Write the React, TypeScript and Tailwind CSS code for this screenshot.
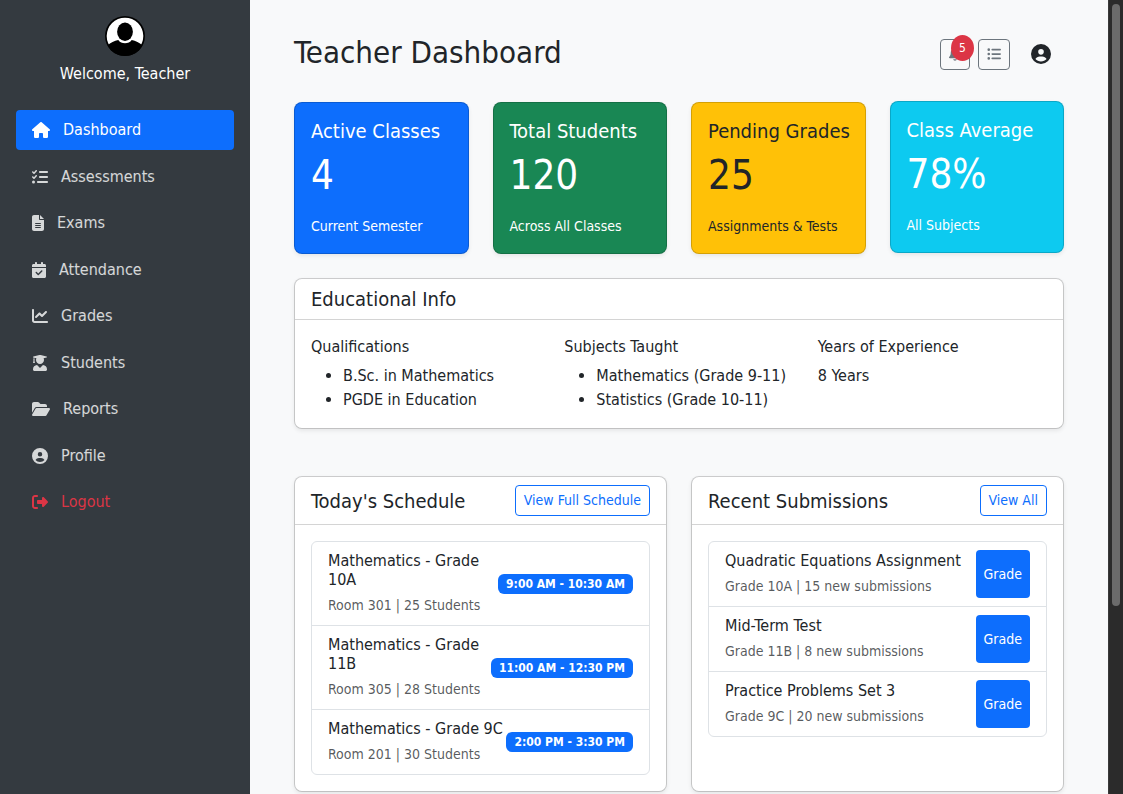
import type { ComponentType, ReactNode } from "react";
import { FaUserGraduate } from "react-icons/fa";
import {
  FaBell,
  FaCalendarCheck,
  FaChartLine,
  FaCircleUser,
  FaFileLines,
  FaFolderOpen,
  FaHouse,
  FaListCheck,
  FaListUl,
  FaRightFromBracket,
} from "react-icons/fa6";

type NavItem = {
  label: string;
  Icon: ComponentType<{ className?: string }>;
  width: string;
  tone: string;
};

const muted = "text-white/80";

const navItems: NavItem[] = [
  { label: "Dashboard", Icon: FaHouse, width: "w-[18px]", tone: "bg-[#0d6efd] text-white" },
  { label: "Assessments", Icon: FaListCheck, width: "w-4", tone: muted },
  { label: "Exams", Icon: FaFileLines, width: "w-3", tone: muted },
  { label: "Attendance", Icon: FaCalendarCheck, width: "w-3.5", tone: muted },
  { label: "Grades", Icon: FaChartLine, width: "w-4", tone: muted },
  { label: "Students", Icon: FaUserGraduate, width: "w-4", tone: muted },
  { label: "Reports", Icon: FaFolderOpen, width: "w-[18px]", tone: muted },
  { label: "Profile", Icon: FaCircleUser, width: "w-4", tone: muted },
  { label: "Logout", Icon: FaRightFromBracket, width: "w-4", tone: "text-[#dc3545]" },
];

const stats = [
  { title: "Active Classes", value: "4", note: "Current Semester", tone: "bg-[#0d6efd] text-white" },
  { title: "Total Students", value: "120", note: "Across All Classes", tone: "bg-[#198754] text-white" },
  { title: "Pending Grades", value: "25", note: "Assignments & Tests", tone: "bg-[#ffc107] text-[#212529]" },
  { title: "Class Average", value: "78%", note: "All Subjects", tone: "bg-[#0dcaf0] text-white -translate-y-px" },
];

const schedule = [
  { title: "Mathematics - Grade 10A", detail: "Room 301 | 25 Students", time: "9:00 AM - 10:30 AM" },
  { title: "Mathematics - Grade 11B", detail: "Room 305 | 28 Students", time: "11:00 AM - 12:30 PM" },
  { title: "Mathematics - Grade 9C", detail: "Room 201 | 30 Students", time: "2:00 PM - 3:30 PM" },
];

const submissions = [
  { title: "Quadratic Equations Assignment", detail: "Grade 10A | 15 new submissions" },
  { title: "Mid-Term Test", detail: "Grade 11B | 8 new submissions" },
  { title: "Practice Problems Set 3", detail: "Grade 9C | 20 new submissions" },
];

function Avatar() {
  return (
    <svg viewBox="0 0 40 40" className="size-10" role="img" aria-label="Profile picture">
      <circle cx="20" cy="20" r="20" fill="#000" />
      <circle cx="20" cy="20" r="18.300" fill="#fff" />
      <path d="M2.500 29.500C5.500 26.500 9.500 25 13.300 24C16 28.300 24 28.300 26.700 24C30.500 25 34.500 26.500 37.500 29.500A20 20 0 0 1 2.500 29.500Z" fill="#000" />
      <ellipse cx="20" cy="15.700" rx="7.900" ry="9.200" fill="#000" />
    </svg>
  );
}

function Card({ title, action, children }: { title: string; action?: string; children: ReactNode }) {
  return (
    <section className="rounded-lg border border-black/17 bg-white bg-clip-padding shadow-[0_2px_4px_rgba(0,0,0,0.075)]">
      <header className="flex items-center justify-between border-b border-black/17 px-4 py-2">
        <h2 className="text-xl leading-6">{title}</h2>
        {action && (
          <button type="button" className="rounded border border-[#0d6efd] px-2 py-1 text-sm leading-[21px] text-[#0d6efd]">
            {action}
          </button>
        )}
      </header>
      <div className="p-4">{children}</div>
    </section>
  );
}

function Entry({ title, detail, children }: { title: string; detail: string; children: ReactNode }) {
  return (
    <li className="flex justify-between px-4 py-2">
      <div>
        <h3 className="mb-1 pt-px leading-[19px]">{title}</h3>
        <p className="text-sm leading-6 text-[#212529]/75">{detail}</p>
      </div>
      {children}
    </li>
  );
}

export default function App() {
  return (
    <div className="flex min-h-screen bg-[#f8f9fa] font-['DejaVu_Sans_Condensed','DejaVu_Sans',sans-serif] text-base text-[#212529]">
      <aside className="w-[250px] shrink-0 bg-[#343a40] p-4 text-white">
        <div className="flex flex-col items-center">
          <Avatar />
          <p className="mt-2 leading-5">Welcome, Teacher</p>
        </div>
        <nav className="mt-[26px] flex min-h-[412px] flex-col justify-between">
          {navItems.map(({ label, Icon, width, tone }) => (
            <a key={label} href="#" className={`flex items-center gap-[13px] rounded px-4 py-2 leading-6 ${tone}`}>
              <Icon className={`h-4 ${width}`} />
              {label}
            </a>
          ))}
        </nav>
      </aside>

      <main className="min-w-0 flex-1 px-11 pt-8">
        <div className="flex items-center justify-between pb-[30px]">
          <h1 className="text-[31px] leading-10">Teacher Dashboard</h1>
          <div className="flex items-center gap-2 pt-1">
            <button
              type="button"
              aria-label="Notifications"
              className="relative flex h-[31px] items-center rounded border border-[#6c757d] px-2 text-sm text-[#6c757d]"
            >
              <FaBell className="h-3.5 w-3" />
              <span className="absolute -top-[5px] left-2.5 flex h-[26px] w-[23px] items-center justify-center rounded-[50%] bg-[#dc3545] text-xs font-medium text-white">
                5
              </span>
            </button>
            <button
              type="button"
              aria-label="Task list"
              className="flex h-[31px] items-center rounded border border-[#6c757d] px-2 text-sm text-[#6c757d]"
            >
              <FaListUl />
            </button>
            <button type="button" aria-label="Account" className="px-[13px] text-xl">
              <FaCircleUser />
            </button>
          </div>
        </div>

        <div className="grid grid-cols-4 gap-6">
          {stats.map(({ title, value, note, tone }) => (
            <section
              key={title}
              className={`rounded-lg border border-black/17 p-4 shadow-[0_2px_4px_rgba(0,0,0,0.075)] ${tone}`}
            >
              <h2 className="text-xl leading-6 whitespace-nowrap">{title}</h2>
              <p className="mt-2 text-[40px] leading-[48px]">{value}</p>
              <p className="mt-4 text-sm leading-[22px] whitespace-nowrap">{note}</p>
            </section>
          ))}
        </div>

        <div className="mt-6">
          <Card title="Educational Info">
            <div className="grid grid-cols-3 gap-6">
              <div>
                <h3 className="mb-2 pt-px leading-[19px]">Qualifications</h3>
                <ul className="list-disc pl-8 leading-6">
                  <li>B.Sc. in Mathematics</li>
                  <li>PGDE in Education</li>
                </ul>
              </div>
              <div>
                <h3 className="mb-2 pt-px leading-[19px]">Subjects Taught</h3>
                <ul className="list-disc pl-8 leading-6 whitespace-nowrap">
                  <li>Mathematics (Grade 9-11)</li>
                  <li>Statistics (Grade 10-11)</li>
                </ul>
              </div>
              <div>
                <h3 className="mb-2 pt-px leading-[19px]">Years of Experience</h3>
                <p className="leading-6">8 Years</p>
              </div>
            </div>
          </Card>
        </div>

        <div className="mt-[47px] grid grid-cols-2 gap-6">
          <Card title="Today's Schedule" action="View Full Schedule">
            <ul className="divide-y divide-[#dee2e6] rounded-md border border-[#dee2e6]">
              {schedule.map(({ title, detail, time }) => (
                <Entry key={title} title={title} detail={detail}>
                  <span className="shrink-0 self-center rounded-md bg-[#0d6efd] px-2 py-1 text-xs leading-3 font-bold text-white">
                    {time}
                  </span>
                </Entry>
              ))}
            </ul>
          </Card>
          <Card title="Recent Submissions" action="View All">
            <ul className="divide-y divide-[#dee2e6] rounded-md border border-[#dee2e6]">
              {submissions.map(({ title, detail }) => (
                <Entry key={title} title={title} detail={detail}>
                  <button type="button" className="shrink-0 rounded bg-[#0d6efd] px-2 text-sm text-white">
                    Grade
                  </button>
                </Entry>
              ))}
            </ul>
          </Card>
        </div>
      </main>

      <div className="w-[15px] shrink-0 border-l border-[#3a3a3a] bg-[#2b2b2b] pt-1 pr-[3px] pl-[3px]" aria-hidden="true">
        <div className="h-[602px] w-2 rounded-full bg-[#6b6b6b]" />
      </div>
    </div>
  );
}
